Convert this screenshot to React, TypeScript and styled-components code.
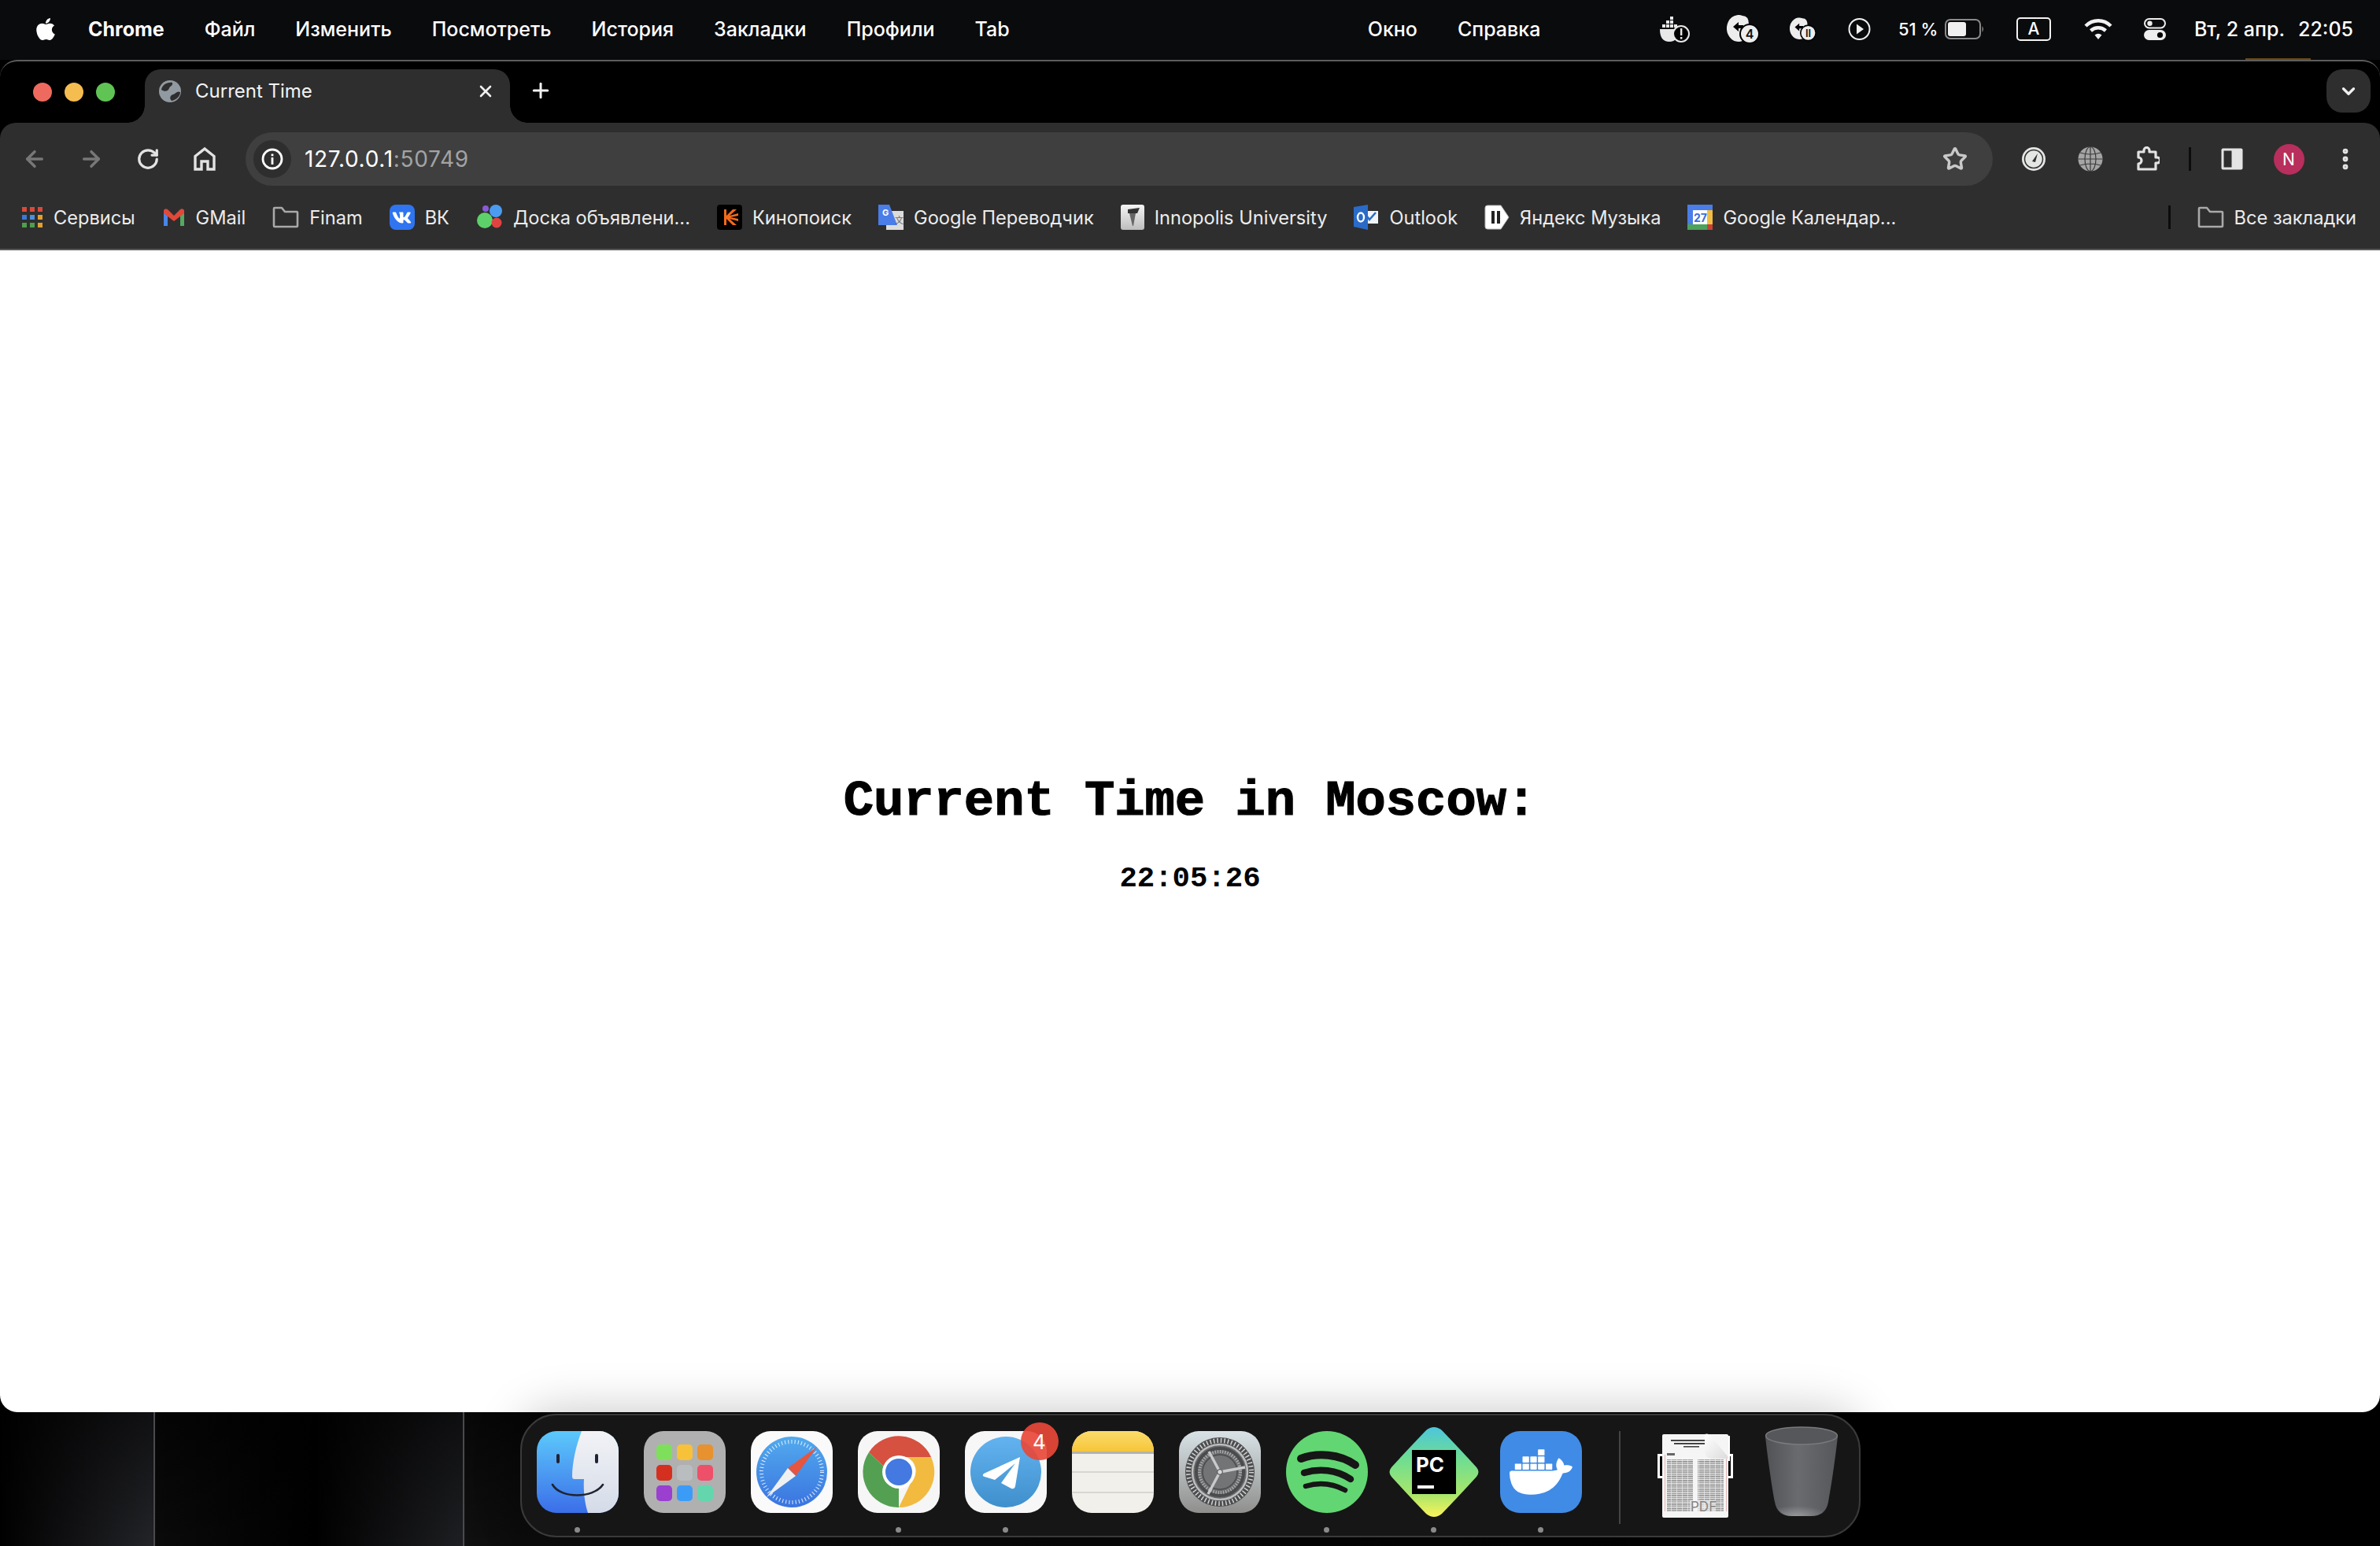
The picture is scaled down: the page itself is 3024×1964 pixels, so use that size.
import React from 'react';
import styled, { createGlobalStyle } from 'styled-components';
import { ArrowLeft, ArrowRight, ChevronDown, EllipsisVertical, Plus, RotateCw, Star, X } from 'lucide-react';
import { FaApple, FaVk } from 'react-icons/fa';
import { SiDocker } from 'react-icons/si';

const GlobalStyle = createGlobalStyle`
  html, body {
    margin: 0;
    width: 3024px;
    height: 1964px;
    overflow: hidden;
    background: #000;
    font-family: Inter, "Noto Sans", sans-serif;
  }
`;

const menuItems = ['Файл', 'Изменить', 'Посмотреть', 'История', 'Закладки', 'Профили', 'Tab'];

const FinderIcon = () => (
  <svg viewBox="0 0 104 104" width="104" height="104">
    <defs>
      <linearGradient id="finderL" x1="0" y1="0" x2="0" y2="1">
        <stop offset="0" stopColor="#5cc9fb" />
        <stop offset="1" stopColor="#3b6ee9" />
      </linearGradient>
      <linearGradient id="finderR" x1="0" y1="0" x2="0" y2="1">
        <stop offset="0" stopColor="#f2f3f6" />
        <stop offset="1" stopColor="#d4dbe8" />
      </linearGradient>
      <clipPath id="finderClip">
        <rect width="104" height="104" rx="25" />
      </clipPath>
    </defs>
    <g clipPath="url(#finderClip)">
      <rect width="104" height="104" fill="url(#finderL)" />
      <path d="M57 0 C50 18 45 40 45 58 Q45 61 48 61 H60 C59 76 61 92 65 104 H104 V0 Z" fill="url(#finderR)" />
    </g>
    <rect x="25" y="29" width="4" height="12" rx="2" fill="#223" />
    <rect x="74" y="29" width="4" height="12" rx="2" fill="#223" />
    <path d="M20 68 C30 86 72 86 84 68" fill="none" stroke="#1f2430" strokeWidth="2.6" strokeLinecap="round" />
  </svg>
);

const launchColors = ['#7ee05a', '#f8c13a', '#e8912f', '#d5301f', '#b9bdc0', '#ee506a', '#9a3fd0', '#3b9cf8', '#63d6ae'];

const LaunchpadIcon = () => (
  <svg viewBox="0 0 104 104" width="104" height="104">
    <rect width="104" height="104" rx="25" fill="#b0b0b0" />
    {launchColors.map((c, i) => (
      <rect key={c} x={16 + (i % 3) * 26} y={17 + Math.floor(i / 3) * 26} width="20" height="20" rx="5" fill={c} />
    ))}
  </svg>
);

const SafariIcon = () => (
  <svg viewBox="0 0 104 104" width="104" height="104">
    <defs>
      <linearGradient id="safariBg" x1="0" y1="0" x2="0" y2="1">
        <stop offset="0" stopColor="#52aaee" />
        <stop offset="1" stopColor="#3a74e0" />
      </linearGradient>
    </defs>
    <rect width="104" height="104" rx="25" fill="#fafafa" />
    <circle cx="52" cy="52" r="45" fill="url(#safariBg)" />
    <circle cx="52" cy="52" r="38.5" fill="none" stroke="#fff" strokeWidth="5" strokeDasharray="1 3.2" opacity="0.85" />
    <polygon points="84,20 57,57 47,47" fill="#e5553f" />
    <polygon points="20,84 47,47 57,57" fill="#eef0f2" />
  </svg>
);

const ChromeDockIcon = () => (
  <svg viewBox="0 0 104 104" width="104" height="104">
    <rect width="104" height="104" rx="25" fill="#f6f6f6" />
    <path d="M14 27 A45 45 0 0 1 93 33 L52 33 A19 19 0 0 0 34 46 Z" fill="#d6513f" />
    <path d="M14 27 L34 46 A19 19 0 0 0 52 71 L52 97 A45 45 0 0 1 14 27 Z" fill="#54a052" />
    <path d="M93 33 A45 45 0 0 1 52 97 L68 64 A19 19 0 0 0 62 33 Z" fill="#f2bb40" />
    <circle cx="52" cy="52" r="21" fill="#fff" />
    <circle cx="52" cy="52" r="17" fill="#4379e0" />
  </svg>
);

const TelegramIcon = () => (
  <svg viewBox="0 0 104 104" width="104" height="104">
    <defs>
      <linearGradient id="tgBg" x1="0" y1="0" x2="0" y2="1">
        <stop offset="0" stopColor="#62b3f0" />
        <stop offset="1" stopColor="#3f8fcd" />
      </linearGradient>
    </defs>
    <rect width="104" height="104" rx="25" fill="#f7f7f7" />
    <circle cx="52" cy="52" r="45" fill="url(#tgBg)" />
    <path d="M70 33 L24 54 Q21 57 25 58 L38 62 L64 41 L46 66 L59 73 Q63 74 64 70 Z" fill="#fff" />
  </svg>
);

const NotesIcon = () => (
  <svg viewBox="0 0 104 104" width="104" height="104">
    <defs>
      <linearGradient id="notesTop" x1="0" y1="0" x2="0" y2="1">
        <stop offset="0" stopColor="#fbdc6b" />
        <stop offset="1" stopColor="#f6c53a" />
      </linearGradient>
      <clipPath id="notesClip">
        <rect width="104" height="104" rx="25" />
      </clipPath>
    </defs>
    <g clipPath="url(#notesClip)">
      <rect width="104" height="104" fill="#f2f0ea" />
      <rect width="104" height="26" fill="url(#notesTop)" />
      <rect y="26" width="104" height="3" fill="#b5b3ad" />
      <rect y="51" width="104" height="2" fill="#d8d6d0" />
      <rect y="77" width="104" height="2" fill="#d8d6d0" />
    </g>
  </svg>
);

const SettingsIcon = () => (
  <svg viewBox="0 0 104 104" width="104" height="104">
    <defs>
      <linearGradient id="setBg" x1="0" y1="0" x2="0" y2="1">
        <stop offset="0" stopColor="#d8e2e6" />
        <stop offset="1" stopColor="#8f8f8d" />
      </linearGradient>
    </defs>
    <rect width="104" height="104" rx="25" fill="url(#setBg)" />
    <circle cx="52" cy="52" r="44" fill="#4c4d4f" />
    <circle cx="52" cy="52" r="40" fill="none" stroke="#d4d4d4" strokeWidth="6" strokeDasharray="1.5 3" />
    <circle cx="52" cy="52" r="35" fill="#6a6b6d" stroke="#bdbebf" strokeWidth="2.5" />
    <circle cx="52" cy="52" r="30" fill="none" stroke="#4a4b4d" strokeWidth="4" />
    <circle cx="52" cy="52" r="26" fill="none" stroke="#aaabad" strokeWidth="4" strokeDasharray="1.4 1.8" />
    <circle cx="52" cy="52" r="22" fill="#737476" stroke="#4b4c4e" strokeWidth="1.5" />
    <path d="M52 52 L38 26 M52 52 L84 46 M52 52 L37 80" stroke="#c9cacc" strokeWidth="3.4" />
    <circle cx="52" cy="52" r="3.4" fill="#d5d6d8" stroke="#444" strokeWidth="1" />
  </svg>
);

const SpotifyIcon = () => (
  <svg viewBox="0 0 104 104" width="104" height="104">
    <circle cx="52" cy="52" r="52" fill="#62d672" />
    <path d="M19 35 C40 27 68 29 88 43" fill="none" stroke="#161616" strokeWidth="10" strokeLinecap="round" />
    <path d="M23 53 C42 47 64 49 82 61" fill="none" stroke="#161616" strokeWidth="8.5" strokeLinecap="round" />
    <path d="M25 70 C42 65 58 66 75 75" fill="none" stroke="#161616" strokeWidth="6.5" strokeLinecap="round" />
  </svg>
);

const PyCharmIcon = () => (
  <svg viewBox="0 0 116 116" width="116" height="116">
    <defs>
      <linearGradient id="pcBg" x1="0" y1="0" x2="0" y2="1">
        <stop offset="0" stopColor="#4cc6dc" />
        <stop offset="0.35" stopColor="#6edd92" />
        <stop offset="0.75" stopColor="#a9e66a" />
        <stop offset="1" stopColor="#fbf35a" />
      </linearGradient>
    </defs>
    <path d="M48 5 Q58 -3 68 5 Q92 30 112 52 Q117 58 112 64 Q92 86 68 111 Q58 119 48 111 Q24 86 4 64 Q-1 58 4 52 Q24 30 48 5 Z" fill="url(#pcBg)" />
    <rect x="30" y="30" width="56" height="56" fill="#000" />
    <text x="35" y="58" fontFamily="Inter, sans-serif" fontWeight="700" fontSize="26" fill="#fff">PC</text>
    <rect x="37" y="75" width="21" height="4" fill="#fff" />
  </svg>
);

const DockerDockIcon = () => (
  <DockerTile>
    <SiDocker size={80} color="#fff" />
  </DockerTile>
);

const PdfIcon = () => (
  <svg viewBox="0 0 100 124" width="100" height="124">
    <defs>
      <pattern id="pdfLines" width="7" height="2.4" patternUnits="userSpaceOnUse">
        <rect width="6.4" height="1.2" fill="#7c7c7c" />
      </pattern>
      <linearGradient id="pdfFold" x1="0" y1="0" x2="1" y2="1">
        <stop offset="0" stopColor="#ffffff" />
        <stop offset="1" stopColor="#dcdcdc" />
      </linearGradient>
    </defs>
    <rect x="3" y="39" width="96" height="31" fill="#fff" />
    <rect x="6" y="42" width="90" height="25" fill="#000" />
    <rect x="62" y="16" width="33" height="32" fill="#fff" />
    <rect x="64" y="19" width="27" height="28" fill="#000" />
    <rect x="9" y="14" width="84" height="106" rx="2" fill="#f5f5f5" />
    <rect x="20" y="21" width="50" height="1.8" fill="#333" />
    <rect x="24" y="25" width="42" height="1.8" fill="#333" />
    <rect x="36" y="29" width="20" height="1.6" fill="#444" />
    <rect x="15" y="38" width="10" height="3" fill="#666" />
    <rect x="15" y="46" width="33" height="66" fill="url(#pdfLines)" />
    <rect x="54" y="46" width="33" height="66" fill="url(#pdfLines)" />
    <rect x="12" y="40" width="0.8" height="72" fill="#e2a5a5" />
    <rect x="90" y="40" width="0.8" height="72" fill="#e2a5a5" />
    <path d="M63 14 Q68 12 72 18 L92 42 Q94 45 91 45 H72 Q64 45 63 36 Z" fill="url(#pdfFold)" />
    <rect x="44" y="98" width="32" height="15" fill="#f5f5f5" opacity="0.6" />
    <text x="45" y="112" fontFamily="Inter, sans-serif" fontSize="17" fill="#858585">PDF</text>
  </svg>
);

const TrashIcon = () => (
  <svg viewBox="0 0 92 116" width="92" height="116">
    <defs>
      <linearGradient id="trashBg" x1="0" y1="0" x2="1" y2="0">
        <stop offset="0" stopColor="#505256" />
        <stop offset="0.45" stopColor="#696b6f" />
        <stop offset="1" stopColor="#55575b" />
      </linearGradient>
      <radialGradient id="trashGlow" cx="0.4" cy="1" r="0.6">
        <stop offset="0" stopColor="#a9abad" stopOpacity="0.7" />
        <stop offset="1" stopColor="#a9abad" stopOpacity="0" />
      </radialGradient>
    </defs>
    <path d="M0 13 C3 40 8 75 12 96 Q15 114 34 114 H58 Q77 114 80 96 C84 75 89 40 92 13 Z" fill="url(#trashBg)" />
    <path d="M12 92 Q15 114 34 114 H58 Q77 114 80 92 Z" fill="url(#trashGlow)" />
    <ellipse cx="46" cy="12" rx="45.5" ry="11" fill="#55575b" stroke="#787a7e" strokeWidth="1.5" />
  </svg>
);

const GlobeFavicon = () => (
  <svg viewBox="0 0 28 28" width="28" height="28">
    <circle cx="14" cy="14" r="14" fill="#929aa1" />
    <path d="M3 12 C4 6 10 2 17 3 C18 7 14 7 13 10 C12 14 7 15 3 12 Z" fill="#2e2e2e" />
    <path d="M27 15 C27 20 22 25 16 26 C13 23 14 19 18 18 C21 17 23 13 27 15 Z" fill="#2e2e2e" />
  </svg>
);

const HomeIcon = () => (
  <svg viewBox="0 0 30 32" width="30" height="32">
    <path d="M15 3 L3 12.5 V29 H11 V19 H19 V29 H27 V12.5 Z" fill="none" stroke="#e3e3e3" strokeWidth="3.4" />
  </svg>
);

const InfoIcon = () => (
  <svg viewBox="0 0 28 28" width="28" height="28">
    <circle cx="14" cy="14" r="12" fill="none" stroke="#fff" strokeWidth="2.8" />
    <rect x="12.6" y="12" width="2.8" height="9" fill="#fff" />
    <rect x="12.6" y="7.5" width="2.8" height="2.8" fill="#fff" />
  </svg>
);

const SpeedIcon = () => (
  <svg viewBox="0 0 32 32" width="32" height="32">
    <circle cx="16" cy="16" r="15" fill="#e3e6e3" />
    <circle cx="16" cy="16" r="11.5" fill="none" stroke="#2e2e2e" strokeWidth="1.5" />
    <path d="M14 19 L21 9 L18 20 Z" fill="#2e2e2e" />
  </svg>
);

const WorldIcon = () => (
  <svg viewBox="0 0 32 32" width="32" height="32">
    <circle cx="16" cy="16" r="15.5" fill="#a5a5a5" />
    <g fill="none" stroke="#3a3a3a" strokeWidth="1.2">
      <ellipse cx="16" cy="16" rx="7" ry="15.5" />
      <path d="M16 0.5 V31.5 M0.5 16 H31.5 M3 8 Q16 12 29 8 M3 24 Q16 20 29 24" />
    </g>
  </svg>
);

const PuzzleIcon = () => (
  <svg viewBox="0 0 32 32" width="32" height="32">
    <path d="M5 7 H12 V5 A3.5 3.5 0 0 1 19 5 V7 H27 V14 H29 A3.5 3.5 0 0 1 29 21 H27 V29 H5 V22 A3.5 3.5 0 0 0 5 14 Z" fill="none" stroke="#e3e3e3" strokeWidth="3.2" strokeLinejoin="round" />
  </svg>
);

const SidebarIcon = () => (
  <svg viewBox="0 0 30 30" width="30" height="30">
    <rect x="1.5" y="1.5" width="27" height="27" rx="2" fill="#e3e3e3" />
    <rect x="4.5" y="4.5" width="10" height="21" fill="#2e2e2e" />
  </svg>
);

const AppsIcon = () => {
  const colors = ['#d84a3a', '#d84a3a', '#d84a3a', '#3b78d8', '#4d8fd8', '#e0a030', '#4f9d4f', '#4f9d4f', '#e0a030'];
  return (
    <svg viewBox="0 0 28 28" width="28" height="28">
      {colors.map((c, i) => (
        <rect key={i} x={1 + (i % 3) * 10} y={1 + Math.floor(i / 3) * 10} width="6" height="6" fill={c} />
      ))}
    </svg>
  );
};

const GmailIcon = () => (
  <svg viewBox="0 0 30 26" width="30" height="26">
    <path d="M2 24 V4 L7 3 V24 Z" fill="#4a85e8" />
    <path d="M23 24 V3 L28 4 V24 Z" fill="#55a960" />
    <path d="M2 4 Q4 1 7 3 L15 11 L23 3 Q26 1 28 4 V8 L15 18 L2 8 Z" fill="#e0483a" />
  </svg>
);

const FolderIcon = () => (
  <svg viewBox="0 0 34 28" width="34" height="28">
    <path d="M2 3 Q2 2 3 2 H12 L16 7 H31 Q32 7 32 8 V25 Q32 26 31 26 H3 Q2 26 2 25 Z" fill="none" stroke="#a9a9a9" strokeWidth="2.6" strokeLinejoin="round" />
  </svg>
);

const VkIcon = () => (
  <VkTile>
    <FaVk size={25} color="#fff" />
  </VkTile>
);

const AdsIcon = () => (
  <svg viewBox="0 0 34 32" width="34" height="32">
    <circle cx="11" cy="20" r="10" fill="#5dd06a" />
    <circle cx="25" cy="8" r="8" fill="#4b9cf0" />
    <circle cx="26" cy="23" r="6.5" fill="#e0433f" />
    <circle cx="12" cy="5" r="4" fill="#8b5ad8" />
  </svg>
);

const KinoIcon = () => (
  <svg viewBox="0 0 32 32" width="32" height="32">
    <rect width="32" height="32" rx="4" fill="#000" />
    <path d="M9 6 H12 V14 L20 6 H25 L16 14 L27 11 V14 L17 16 L27 18 V21 L16 18 L25 26 H20 L12 18 V26 H9 Z" fill="#f26a1b" />
  </svg>
);

const TranslateIcon = () => (
  <svg viewBox="0 0 32 32" width="32" height="32">
    <rect x="10" y="8" width="22" height="24" fill="#dcdcdc" />
    <path d="M0 0 H14 L24 26 H0 Z" fill="#4a7de8" />
    <text x="5" y="14" fontFamily="Inter, sans-serif" fontSize="11" fontWeight="700" fill="#fff">G</text>
    <text x="21" y="24" fontFamily="Inter, 'Noto Sans CJK SC', sans-serif" fontSize="11" fill="#666">文</text>
  </svg>
);

const InnopolisIcon = () => (
  <svg viewBox="0 0 30 32" width="30" height="32">
    <defs>
      <linearGradient id="innoBg" x1="0" y1="0" x2="0" y2="1">
        <stop offset="0" stopColor="#f5f5f5" />
        <stop offset="1" stopColor="#bdbdbd" />
      </linearGradient>
    </defs>
    <rect width="30" height="32" rx="3" fill="url(#innoBg)" />
    <path d="M9 6 L24 4 L21 11 H9 Z" fill="#333" />
    <path d="M11 11 L19 11 L16 27 H15 Z" fill="#666" />
  </svg>
);

const OutlookIcon = () => (
  <svg viewBox="0 0 32 32" width="32" height="32">
    <rect x="14" y="8" width="17" height="16" fill="#f0f4fa" />
    <path d="M17 15 L20 19 L28 10" fill="none" stroke="#2a6bc8" strokeWidth="2.6" />
    <path d="M0 3 L18 0 V32 L0 28 Z" fill="#2a6bc8" />
    <ellipse cx="9" cy="16" rx="4" ry="5.5" fill="none" stroke="#fff" strokeWidth="2.4" />
  </svg>
);

const YandexIcon = () => (
  <svg viewBox="0 0 32 32" width="32" height="32">
    <path d="M4 1 H21 L31 16 L21 31 H4 Q1 31 1 28 V4 Q1 1 4 1 Z" fill="#fff" stroke="#bbb" strokeWidth="1" />
    <rect x="9" y="8" width="4" height="16" fill="#222" />
    <rect x="16" y="8" width="4" height="16" fill="#222" />
  </svg>
);

const CalendarIcon = () => (
  <svg viewBox="0 0 32 32" width="32" height="32">
    <rect width="32" height="32" fill="#fff" />
    <rect width="32" height="7" fill="#4a7de8" />
    <rect width="7" height="32" fill="#4a7de8" />
    <rect x="25" y="7" width="7" height="18" fill="#f2bd42" />
    <rect y="25" width="27" height="7" fill="#4ea25a" />
    <rect x="25" y="25" width="7" height="7" fill="#c94236" />
    <text x="8" y="22" fontFamily="Inter, sans-serif" fontSize="14" fontWeight="700" fill="#3a6fd8">27</text>
  </svg>
);

const DockerStatus = () => (
  <svg viewBox="0 0 38 36" width="38" height="36">
    <g fill="#e8e8e8">
      <rect x="13" y="2" width="4" height="4" />
      <rect x="8" y="7" width="4" height="4" />
      <rect x="13" y="7" width="4" height="4" />
      <rect x="3" y="12" width="4" height="4" />
      <rect x="8" y="12" width="4" height="4" />
      <rect x="13" y="12" width="4" height="4" />
      <rect x="18" y="12" width="4" height="4" />
      <path d="M0 18 H24 Q24 34 12 34 Q0 34 0 18 Z" />
    </g>
    <circle cx="27" cy="24" r="10" fill="#000" stroke="#e8e8e8" strokeWidth="2" />
    <rect x="26" y="17" width="2.4" height="9" fill="#e8e8e8" />
    <rect x="26" y="28" width="2.4" height="2.6" fill="#e8e8e8" />
  </svg>
);

const CloudBadge = ({ label, width }: { label: string; width: number }) => (
  <svg viewBox="0 0 42 36" width={width} height="36">
    <path d="M20 1 A15 17 0 1 0 20 33 H28 V12 Q28 1 20 1 Z" fill="#ededed" />
    <circle cx="29" cy="24" r="12" fill="#ededed" stroke="#000" strokeWidth="2" />
    <text x="29" y="30" textAnchor="middle" fontFamily="Inter, sans-serif" fontSize="16" fontWeight="600" fill="#111">{label}</text>
    <path d="M8 15 L15 9 V13 H21 V17 H15 V21 Z" fill="#000" />
  </svg>
);

const PlayStatus = () => (
  <svg viewBox="0 0 29 30" width="29" height="30">
    <circle cx="14.5" cy="15" r="13" fill="none" stroke="#f0f0f0" strokeWidth="2" />
    <path d="M11 8.5 L20 15 L11 21.5 Z" fill="#f0f0f0" />
  </svg>
);

const BatteryIcon = () => (
  <svg viewBox="0 0 51 26" width="51" height="26">
    <rect x="1" y="1" width="44" height="24" rx="6" fill="none" stroke="#8a8a8a" strokeWidth="2" />
    <rect x="4" y="4" width="23" height="18" rx="3" fill="#f0f0f0" />
    <path d="M47.5 9 Q50.5 13 47.5 17 Z" fill="#8a8a8a" />
  </svg>
);

const WifiIcon = () => (
  <svg viewBox="0 0 36 28" width="36" height="28" fill="none" stroke="#f2f2f2" strokeWidth="4.4">
    <path d="M2 10 C11 1 25 1 34 10" />
    <path d="M8.5 16 C14 11 22 11 27.5 16" />
    <path d="M18 27 L13.5 21.5 Q18 18 22.5 21.5 Z" fill="#f2f2f2" stroke="none" />
  </svg>
);

const ControlIcon = () => (
  <svg viewBox="0 0 28 28" width="28" height="28">
    <rect x="1" y="1" width="26" height="11.5" rx="5.7" fill="none" stroke="#eee" strokeWidth="2" />
    <circle cx="7.5" cy="6.7" r="3.2" fill="#eee" />
    <rect x="0" y="15" width="28" height="13" rx="6.5" fill="#eee" />
    <circle cx="20.5" cy="21.5" r="3.6" fill="#000" />
  </svg>
);

const bookmarks = [
  { label: 'Сервисы', icon: <AppsIcon /> },
  { label: 'GMail', icon: <GmailIcon /> },
  { label: 'Finam', icon: <FolderIcon /> },
  { label: 'ВК', icon: <VkIcon /> },
  { label: 'Доска объявлени...', icon: <AdsIcon /> },
  { label: 'Кинопоиск', icon: <KinoIcon /> },
  { label: 'Google Переводчик', icon: <TranslateIcon /> },
  { label: 'Innopolis University', icon: <InnopolisIcon /> },
  { label: 'Outlook', icon: <OutlookIcon /> },
  { label: 'Яндекс Музыка', icon: <YandexIcon /> },
  { label: 'Google Календар...', icon: <CalendarIcon /> },
];

const dockApps = [
  { name: 'finder', icon: <FinderIcon />, running: true },
  { name: 'launchpad', icon: <LaunchpadIcon /> },
  { name: 'safari', icon: <SafariIcon /> },
  { name: 'chrome', icon: <ChromeDockIcon />, running: true },
  { name: 'telegram', icon: <TelegramIcon />, running: true, badge: '4' },
  { name: 'notes', icon: <NotesIcon /> },
  { name: 'settings', icon: <SettingsIcon /> },
  { name: 'spotify', icon: <SpotifyIcon />, running: true },
  { name: 'pycharm', icon: <PyCharmIcon />, running: true },
  { name: 'docker', icon: <DockerDockIcon />, running: true },
];

export default function App() {
  return (
    <Page>
      <GlobalStyle />
      <MenuBar>
        <AppleSlot>
          <FaApple size={32} color="#fff" />
        </AppleSlot>
        <AppName>Chrome</AppName>
        {menuItems.map((m) => (
          <MenuItem key={m}>{m}</MenuItem>
        ))}
        <MenuItem $push={404}>Окно</MenuItem>
        <MenuItem>Справка</MenuItem>
        <StatusRow>
          <StatusSlot>
            <DockerStatus />
          </StatusSlot>
          <StatusSlot $ml={47}>
            <CloudBadge label="4" width={42} />
          </StatusSlot>
          <StatusSlot $ml={38}>
            <CloudBadge label="II" width={34} />
          </StatusSlot>
          <StatusSlot $ml={40}>
            <PlayStatus />
          </StatusSlot>
          <BatteryText>51 %</BatteryText>
          <StatusSlot $ml={9}>
            <BatteryIcon />
          </StatusSlot>
          <InputBadge>A</InputBadge>
          <StatusSlot $ml={42}>
            <WifiIcon />
          </StatusSlot>
          <StatusSlot $ml={40}>
            <ControlIcon />
          </StatusSlot>
          <ClockText>
            <span>Вт, 2 апр.</span>
            <span>22:05</span>
          </ClockText>
        </StatusRow>
        <MenuGlow />
      </MenuBar>

      <BrowserWindow>
        <TabStrip>
          <Lights>
            <Light $color="#ee6a5f" />
            <Light $color="#f5bd4f" />
            <Light $color="#5fc454" />
          </Lights>
          <Tab>
            <GlobeFavicon />
            <TabTitle>Current Time</TabTitle>
            <X size={24} color="#f0f0f0" strokeWidth={2.6} />
          </Tab>
          <NewTab>
            <Plus size={30} color="#f0f0f0" strokeWidth={2.4} />
          </NewTab>
          <TabSearch>
            <ChevronDown size={26} color="#f0f0f0" strokeWidth={3} />
          </TabSearch>
        </TabStrip>

        <Toolbar>
          <NavRow>
            <NavButton>
              <ArrowLeft size={32} color="#777" strokeWidth={2.6} />
            </NavButton>
            <NavButton>
              <ArrowRight size={32} color="#777" strokeWidth={2.6} />
            </NavButton>
            <NavButton>
              <RotateCw size={30} color="#e3e3e3" strokeWidth={2.6} />
            </NavButton>
            <NavButton>
              <HomeIcon />
            </NavButton>
            <AddressBar>
              <InfoChip>
                <InfoIcon />
              </InfoChip>
              <Url>
                127.0.0.1<UrlPort>:50749</UrlPort>
              </Url>
              <Star size={32} color="#c9c9c9" strokeWidth={2.6} />
            </AddressBar>
            <NavButton>
              <SpeedIcon />
            </NavButton>
            <NavButton>
              <WorldIcon />
            </NavButton>
            <NavButton>
              <PuzzleIcon />
            </NavButton>
            <ToolDivider />
            <NavButton>
              <SidebarIcon />
            </NavButton>
            <NavButton>
              <Avatar>N</Avatar>
            </NavButton>
            <NavButton>
              <EllipsisVertical size={34} color="#e3e3e3" strokeWidth={2.8} />
            </NavButton>
          </NavRow>

          <BookmarkRow>
            {bookmarks.map((b) => (
              <Bookmark key={b.label}>
                {b.icon}
                {b.label}
              </Bookmark>
            ))}
            <BookmarkDivider />
            <Bookmark>
              <FolderIcon />
              Все закладки
            </Bookmark>
          </BookmarkRow>
        </Toolbar>

        <Content>
          <Heading>Current Time in Moscow:</Heading>
          <TimeText>22:05:26</TimeText>
        </Content>
      </BrowserWindow>

      <Desktop>
        <Dock>
          {dockApps.map((app) => (
            <DockItem key={app.name}>
              <DockIconBox>
                {app.icon}
                {app.badge && <DockBadge>{app.badge}</DockBadge>}
              </DockIconBox>
              <RunDot $on={!!app.running} />
            </DockItem>
          ))}
          <DockDivider />
          <DockItem>
            <DockIconBox>
              <PdfIcon />
            </DockIconBox>
          </DockItem>
          <DockItem>
            <DockIconBox>
              <TrashIcon />
            </DockIconBox>
          </DockItem>
        </Dock>
      </Desktop>
    </Page>
  );
}

const Page = styled.div`
  width: 3024px;
  height: 1964px;
  display: flex;
  flex-direction: column;
  background: #000;
  color: #fff;
`;

const MenuBar = styled.header`
  position: relative;
  height: 76px;
  flex: none;
  box-sizing: border-box;
  padding: 0 0 3px 44px;
  display: flex;
  align-items: center;
  gap: 51px;
  background: #0a0b0d;
  font-size: 25px;
`;

const AppleSlot = styled.div`
  display: flex;
  width: 28px;
  margin-right: -11px;
`;

const AppName = styled.span`
  font-weight: 700;
`;

const MenuItem = styled.span<{ $push?: number }>`
  font-weight: 500;
  margin-left: ${(p) => p.$push ?? 0}px;
`;

const StatusRow = styled.div`
  margin-left: auto;
  padding-right: 34px;
  display: flex;
  align-items: center;
`;

const StatusSlot = styled.div<{ $ml?: number }>`
  display: flex;
  margin-left: ${(p) => p.$ml ?? 0}px;
`;

const BatteryText = styled.span`
  margin-left: 35px;
  width: 50px;
  font-size: 22px;
  font-weight: 500;
  white-space: nowrap;
`;

const InputBadge = styled.span`
  margin-left: 40px;
  width: 44px;
  height: 30px;
  box-sizing: border-box;
  border: 2px solid #f2f2f2;
  border-radius: 5px;
  display: flex;
  align-items: center;
  justify-content: center;
  font-size: 21px;
  font-weight: 500;
`;

const ClockText = styled.span`
  margin-left: 36px;
  display: flex;
  gap: 17px;
  font-weight: 500;
  white-space: nowrap;
`;

const MenuGlow = styled.span`
  position: absolute;
  left: 2853px;
  bottom: 0;
  width: 83px;
  height: 2px;
  background: #6a4a18;
`;

const BrowserWindow = styled.main`
  height: 1718px;
  flex: none;
  display: flex;
  flex-direction: column;
  box-sizing: border-box;
  border-top: 2px solid #5c5c5c;
  border-radius: 22px;
  background: #000;
  overflow: hidden;
`;

const TabStrip = styled.div`
  height: 78px;
  flex: none;
  box-sizing: border-box;
  padding-top: 10px;
  display: flex;
  align-items: flex-start;
`;

const Lights = styled.div`
  display: flex;
  gap: 16px;
  padding: 17px 38px 0 42px;
`;

const Light = styled.span<{ $color: string }>`
  width: 24px;
  height: 24px;
  border-radius: 50%;
  background: ${(p) => p.$color};
`;

const Tab = styled.div`
  position: relative;
  width: 464px;
  height: 68px;
  box-sizing: border-box;
  padding: 0 19px 13px 18px;
  display: flex;
  align-items: center;
  gap: 18px;
  background: #2e2e2e;
  border-radius: 20px 20px 0 0;

  &::before,
  &::after {
    content: '';
    position: absolute;
    bottom: 0;
    width: 22px;
    height: 22px;
  }

  &::before {
    left: -22px;
    background: radial-gradient(circle at 0 0, transparent 21.5px, #2e2e2e 22px);
  }

  &::after {
    right: -22px;
    background: radial-gradient(circle at 100% 0, transparent 21.5px, #2e2e2e 22px);
  }
`;

const TabTitle = styled.span`
  flex: 1;
  font-size: 24px;
  color: #f2f2f2;
`;

const NewTab = styled.div`
  margin: 12px 0 0 24px;
  display: flex;
`;

const TabSearch = styled.div`
  margin-left: auto;
  margin-right: 12px;
  width: 56px;
  height: 55px;
  border-radius: 20px;
  background: #2e2e2e;
  display: flex;
  align-items: center;
  justify-content: center;
`;

const Toolbar = styled.div`
  flex: none;
  background: #2e2e2e;
  border-radius: 20px 20px 0 0;
  border-bottom: 2px solid #5a5a5a;
`;

const NavRow = styled.div`
  height: 80px;
  box-sizing: border-box;
  padding: 12px 8px 0;
  display: flex;
  align-items: center;
`;

const NavButton = styled.div`
  width: 72px;
  flex: none;
  display: flex;
  align-items: center;
  justify-content: center;
`;

const AddressBar = styled.div`
  flex: 1;
  height: 68px;
  margin: 0 16px;
  box-sizing: border-box;
  padding: 0 32px 0 10px;
  border-radius: 34px;
  background: #3f3f3f;
  display: flex;
  align-items: center;
`;

const InfoChip = styled.div`
  width: 48px;
  height: 48px;
  border-radius: 50%;
  background: #2e2e2e;
  display: flex;
  align-items: center;
  justify-content: center;
`;

const Url = styled.div`
  flex: 1;
  margin-left: 17px;
  font-size: 28px;
  letter-spacing: 0.7px;
  color: #fff;
`;

const UrlPort = styled.span`
  color: #a3a3a3;
`;

const ToolDivider = styled.div`
  width: 3px;
  height: 30px;
  flex: none;
  margin: 0 16px 0 17px;
  background: #0c0c0c;
`;

const Avatar = styled.div`
  width: 39px;
  height: 39px;
  border-radius: 50%;
  background: #b82e5c;
  display: flex;
  align-items: center;
  justify-content: center;
  font-size: 21px;
  color: #fff;
`;

const BookmarkRow = styled.nav`
  height: 80px;
  box-sizing: border-box;
  padding: 0 30px 0 27px;
  display: flex;
  align-items: center;
  gap: 34px;
`;

const Bookmark = styled.div`
  display: flex;
  align-items: center;
  gap: 13px;
  font-size: 23.6px;
  color: #ececec;
  white-space: nowrap;
`;

const BookmarkDivider = styled.div`
  margin-left: auto;
  width: 3px;
  height: 30px;
  background: #0c0c0c;
`;

const VkTile = styled.div`
  width: 32px;
  height: 32px;
  border-radius: 8px;
  background: #2f74f0;
  display: flex;
  align-items: center;
  justify-content: center;
`;

const Content = styled.section`
  flex: 1;
  background: #fff;
  color: #000;
  display: flex;
  flex-direction: column;
  align-items: center;
  justify-content: center;
  gap: 40px;
  padding-top: 7px;
  font-family: 'Liberation Mono', monospace;
  font-weight: 700;
`;

const Heading = styled.h1`
  margin: 0;
  font-size: 63.8px;
  line-height: 72px;
  -webkit-text-stroke: 1.2px #000;
`;

const TimeText = styled.p`
  margin: 0;
  font-size: 37.3px;
  line-height: 44px;
`;

const Desktop = styled.footer`
  flex: 1;
  display: flex;
  justify-content: center;
  padding-top: 2px;
  background:
    linear-gradient(90deg, transparent 195px, #4a4a4e 195px, #4a4a4e 197px, transparent 197px, transparent 588px, #4a4a4e 588px, #4a4a4e 590px, transparent 590px),
    linear-gradient(180deg, rgba(0, 0, 0, 0.55), rgba(0, 0, 0, 0)),
    linear-gradient(90deg, #000 0, #232428 194px, #0a0a0a 198px, #000 400px, #1e1f22 587px, #101010 592px, #0c0c0c 660px, #000 2400px);
`;

const Dock = styled.div`
  position: relative;
  height: 157px;
  box-sizing: border-box;
  padding: 20px 21px 0 19px;
  display: flex;
  gap: 32px;
  background: #161616;
  border: 2px solid #3a3a3a;
  border-radius: 46px;
  box-shadow: 0 -4px 60px rgba(0, 0, 0, 0.22);
`;

const DockItem = styled.div`
  width: 104px;
  display: flex;
  flex-direction: column;
  align-items: center;
  gap: 18px;
`;

const DockIconBox = styled.div`
  position: relative;
  width: 104px;
  height: 104px;
  display: flex;
  align-items: center;
  justify-content: center;

  svg {
    flex: none;
  }
`;

const DockBadge = styled.span`
  position: absolute;
  top: -11px;
  right: -15px;
  width: 48px;
  height: 48px;
  border-radius: 50%;
  background: rgba(232, 72, 56, 0.92);
  display: flex;
  align-items: center;
  justify-content: center;
  font-size: 26px;
  color: #fff;
`;

const RunDot = styled.span<{ $on: boolean }>`
  width: 7px;
  height: 7px;
  border-radius: 50%;
  background: ${(p) => (p.$on ? '#8a8a8a' : 'transparent')};
`;

const DockDivider = styled.div`
  width: 2px;
  height: 118px;
  margin: 0 10px 0 15px;
  background: #444;
`;

const DockerTile = styled.div`
  width: 104px;
  height: 104px;
  border-radius: 25px;
  background: #408be5;
  display: flex;
  align-items: center;
  justify-content: center;
`;
